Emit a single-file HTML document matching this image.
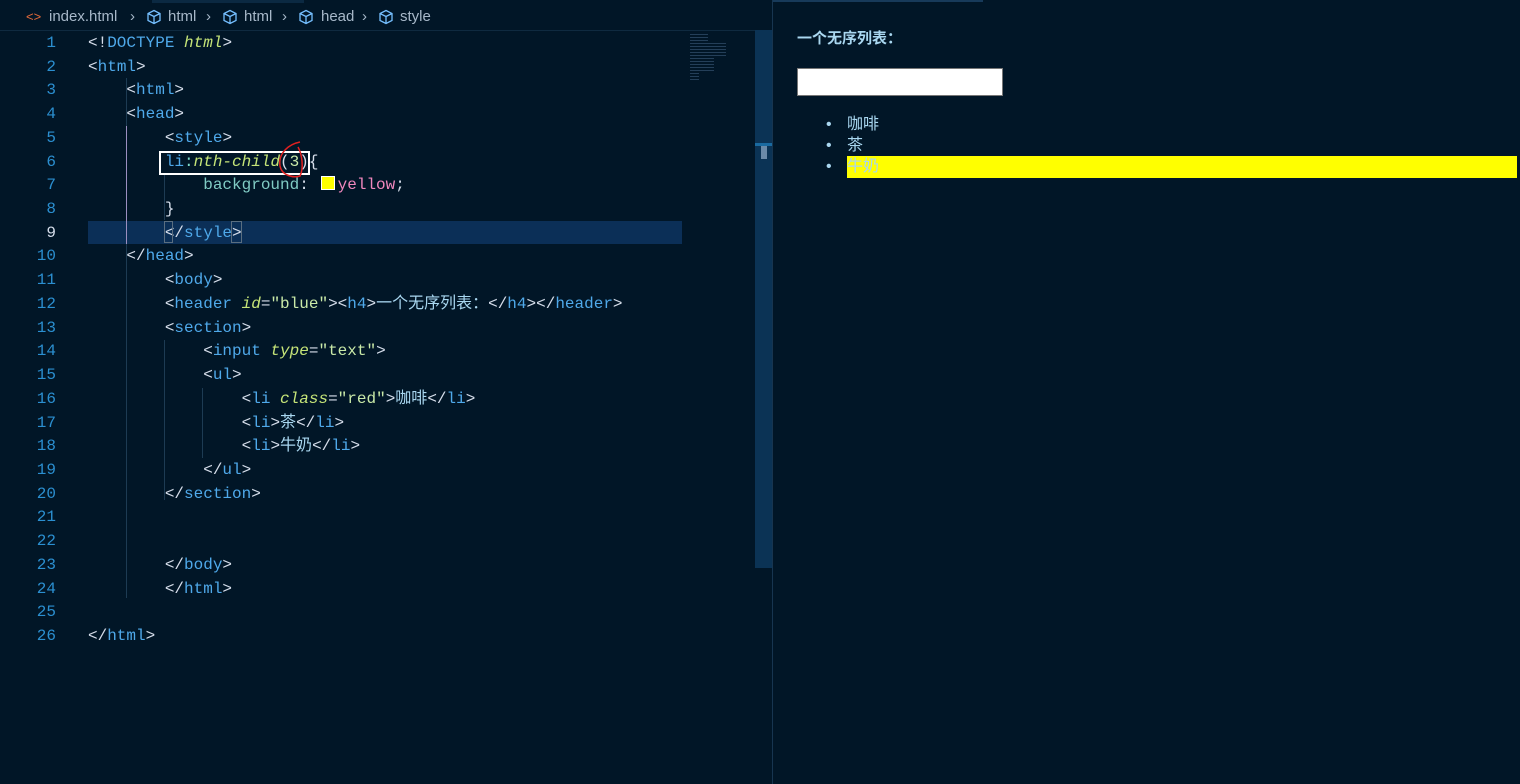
<!DOCTYPE html>
<html><head><meta charset="utf-8"><style>
body{margin:0;width:1520px;height:784px;background:#011627;overflow:hidden;position:relative;font-family:"Liberation Mono","Noto Sans CJK SC",monospace;}
.crumb{position:absolute;left:0;top:4px;width:772px;height:26px;font-family:"Liberation Sans","Noto Sans CJK SC",sans-serif;font-size:15px;color:#a7b8c9;border-bottom:1px solid #0f2a40}
.crumb span{position:absolute;top:4px}
.ln{position:absolute;left:0;width:56px;text-align:right;font-size:16px;color:#2b8fd0;line-height:23.72px}
.code{position:absolute;left:88px;font-size:16px;line-height:23.72px;white-space:pre;color:#d6deeb}
.b{color:#d6deeb}.t{color:#4fa9ea}.a{color:#c5e478;font-style:italic}.s{color:#c9e9a8}.p{color:#80cbc4}.v{color:#f087bd}.k{color:#7fdbca}
.guide{position:absolute;width:1px;background:#1d3b53}
</style></head><body>
<div style="position:absolute;left:152px;top:0;width:152px;height:3px;background:#0b2942"></div>
<div class="crumb">
<span style="left:26px;color:#e36a3a;font-size:13px;top:5px">&lt;&gt;</span>
<span style="left:49px">index.html</span>
<span style="left:130px">›</span>
<svg style="position:absolute;left:146px;top:5px" width="16" height="16" viewBox="0 0 16 16" fill="none" stroke="#75bfff" stroke-width="1.3"><path d="M8 1.5l6 3v7l-6 3-6-3v-7z M2 4.5l6 3 6-3 M8 7.5v7"/></svg>
<span style="left:168px">html</span><span style="left:206px">›</span>
<svg style="position:absolute;left:222px;top:5px" width="16" height="16" viewBox="0 0 16 16" fill="none" stroke="#75bfff" stroke-width="1.3"><path d="M8 1.5l6 3v7l-6 3-6-3v-7z M2 4.5l6 3 6-3 M8 7.5v7"/></svg>
<span style="left:244px">html</span><span style="left:282px">›</span>
<svg style="position:absolute;left:298px;top:5px" width="16" height="16" viewBox="0 0 16 16" fill="none" stroke="#75bfff" stroke-width="1.3"><path d="M8 1.5l6 3v7l-6 3-6-3v-7z M2 4.5l6 3 6-3 M8 7.5v7"/></svg>
<span style="left:321px">head</span><span style="left:362px">›</span>
<svg style="position:absolute;left:378px;top:5px" width="16" height="16" viewBox="0 0 16 16" fill="none" stroke="#75bfff" stroke-width="1.3"><path d="M8 1.5l6 3v7l-6 3-6-3v-7z M2 4.5l6 3 6-3 M8 7.5v7"/></svg>
<span style="left:400px">style</span>
</div>
<div style="position:absolute;left:88px;top:221px;width:594px;height:23px;background:#0b2f57"></div>
<div class="guide" style="left:126px;top:78px;height:520px"></div>
<div class="guide" style="left:126px;top:126px;height:118px;background:#9b8fc0"></div>
<div class="guide" style="left:164px;top:174px;height:46px"></div>
<div class="guide" style="left:164px;top:340px;height:160px"></div>
<div class="guide" style="left:202px;top:388px;height:70px"></div>
<div class="ln" style="top:32px">1<br>2<br>3<br>4<br>5<br>6<br>7<br>8<br><span style="color:#d6deeb">9</span><br>10<br>11<br>12<br>13<br>14<br>15<br>16<br>17<br>18<br>19<br>20<br>21<br>22<br>23<br>24<br>25<br>26</div>
<div class="code" style="top:32px"><span class="b">&lt;!</span><span class="t">DOCTYPE</span> <span class="a">html</span><span class="b">&gt;</span>
&lt;<span class="t">html</span>&gt;
    &lt;<span class="t">html</span>&gt;
    &lt;<span class="t">head</span>&gt;
        &lt;<span class="t">style</span>&gt;
        <span class="t">li</span><span class="k">:</span><span class="a">nth-child</span>(<span class="s">3</span>){
            <span class="p">background</span>:   <span class="v">yellow</span>;
        }
        &lt;/<span class="t">style</span>&gt;
    &lt;/<span class="t">head</span>&gt;
        &lt;<span class="t">body</span>&gt;
        &lt;<span class="t">header</span> <span class="a">id</span>=<span class="s">"blue"</span>&gt;&lt;<span class="t">h4</span>&gt;<span style="color:#a9d7f0">一个无序列表：</span>&lt;/<span class="t">h4</span>&gt;&lt;/<span class="t">header</span>&gt;
        &lt;<span class="t">section</span>&gt;
            &lt;<span class="t">input</span> <span class="a">type</span>=<span class="s">"text"</span>&gt;
            &lt;<span class="t">ul</span>&gt;
                &lt;<span class="t">li</span> <span class="a">class</span>=<span class="s">"red"</span>&gt;<span style="color:#a9d7f0">咖啡</span>&lt;/<span class="t">li</span>&gt;
                &lt;<span class="t">li</span>&gt;<span style="color:#a9d7f0">茶</span>&lt;/<span class="t">li</span>&gt;
                &lt;<span class="t">li</span>&gt;<span style="color:#a9d7f0">牛奶</span>&lt;/<span class="t">li</span>&gt;
            &lt;/<span class="t">ul</span>&gt;
        &lt;/<span class="t">section</span>&gt;


        &lt;/<span class="t">body</span>&gt;
        &lt;/<span class="t">html</span>&gt;

&lt;/<span class="t">html</span>&gt;</div>
<div style="position:absolute;left:321px;top:176px;width:12px;height:12px;background:#ffff00;border:1px solid #fff"></div>
<div style="position:absolute;left:159px;top:151px;width:151px;height:24px;border:2px solid #fff;box-sizing:border-box"></div>
<svg style="position:absolute;left:270px;top:138px" width="40" height="45"><path d="M30 4 C20 6 8 14 10 28 C12 38 24 40 30 38 C34 30 32 16 28 9" fill="none" stroke="#e02020" stroke-width="1.5"/></svg>
<div style="position:absolute;left:164px;top:221px;width:9px;height:22px;border:1px solid #5a6e80;box-sizing:border-box"></div>
<div style="position:absolute;left:231px;top:221px;width:11px;height:22px;border:1px solid #5a6e80;box-sizing:border-box"></div>
<div style="position:absolute;left:690px;top:32px;width:60px;height:50px;opacity:.6;background:repeating-linear-gradient(#011627 0 2px,#3b5a7a 2px 3px);clip-path:polygon(0 0,30% 0,30% 20%,60% 20%,60% 50%,40% 50%,40% 80%,15% 80%,15% 100%,0 100%)"></div>
<div style="position:absolute;left:755px;top:30px;width:17px;height:538px;background:#0b3355"></div>
<div style="position:absolute;left:755px;top:143px;width:17px;height:3px;background:#1a6aa0"></div>
<div style="position:absolute;left:761px;top:146px;width:6px;height:13px;background:#6b8aa8"></div>
<div style="position:absolute;left:772px;top:0;width:1px;height:784px;background:#173550"></div>
<div style="position:absolute;left:773px;top:0;width:210px;height:2px;background:#173a5a"></div>
<div style="position:absolute;left:797px;top:27px;font-family:'Liberation Sans','Noto Sans CJK SC',sans-serif;font-weight:bold;font-size:15px;color:#a9d7f0">一个无序列表：</div>
<div style="position:absolute;left:797px;top:68px;width:206px;height:28px;background:#fff;border:1px solid #767676;box-sizing:border-box"></div>
<div style="position:absolute;left:847px;top:156px;width:670px;height:22px;background:#ffff00"></div>
<div style="position:absolute;left:826px;top:114px;font-family:'Liberation Sans','Noto Sans CJK SC',sans-serif;font-size:16px;line-height:21px;color:#a9d7f0">
<div><span style="display:inline-block;width:21px">•</span>咖啡</div><div><span style="display:inline-block;width:21px">•</span>茶</div><div><span style="display:inline-block;width:21px">•</span>牛奶</div></div>
</body></html>
